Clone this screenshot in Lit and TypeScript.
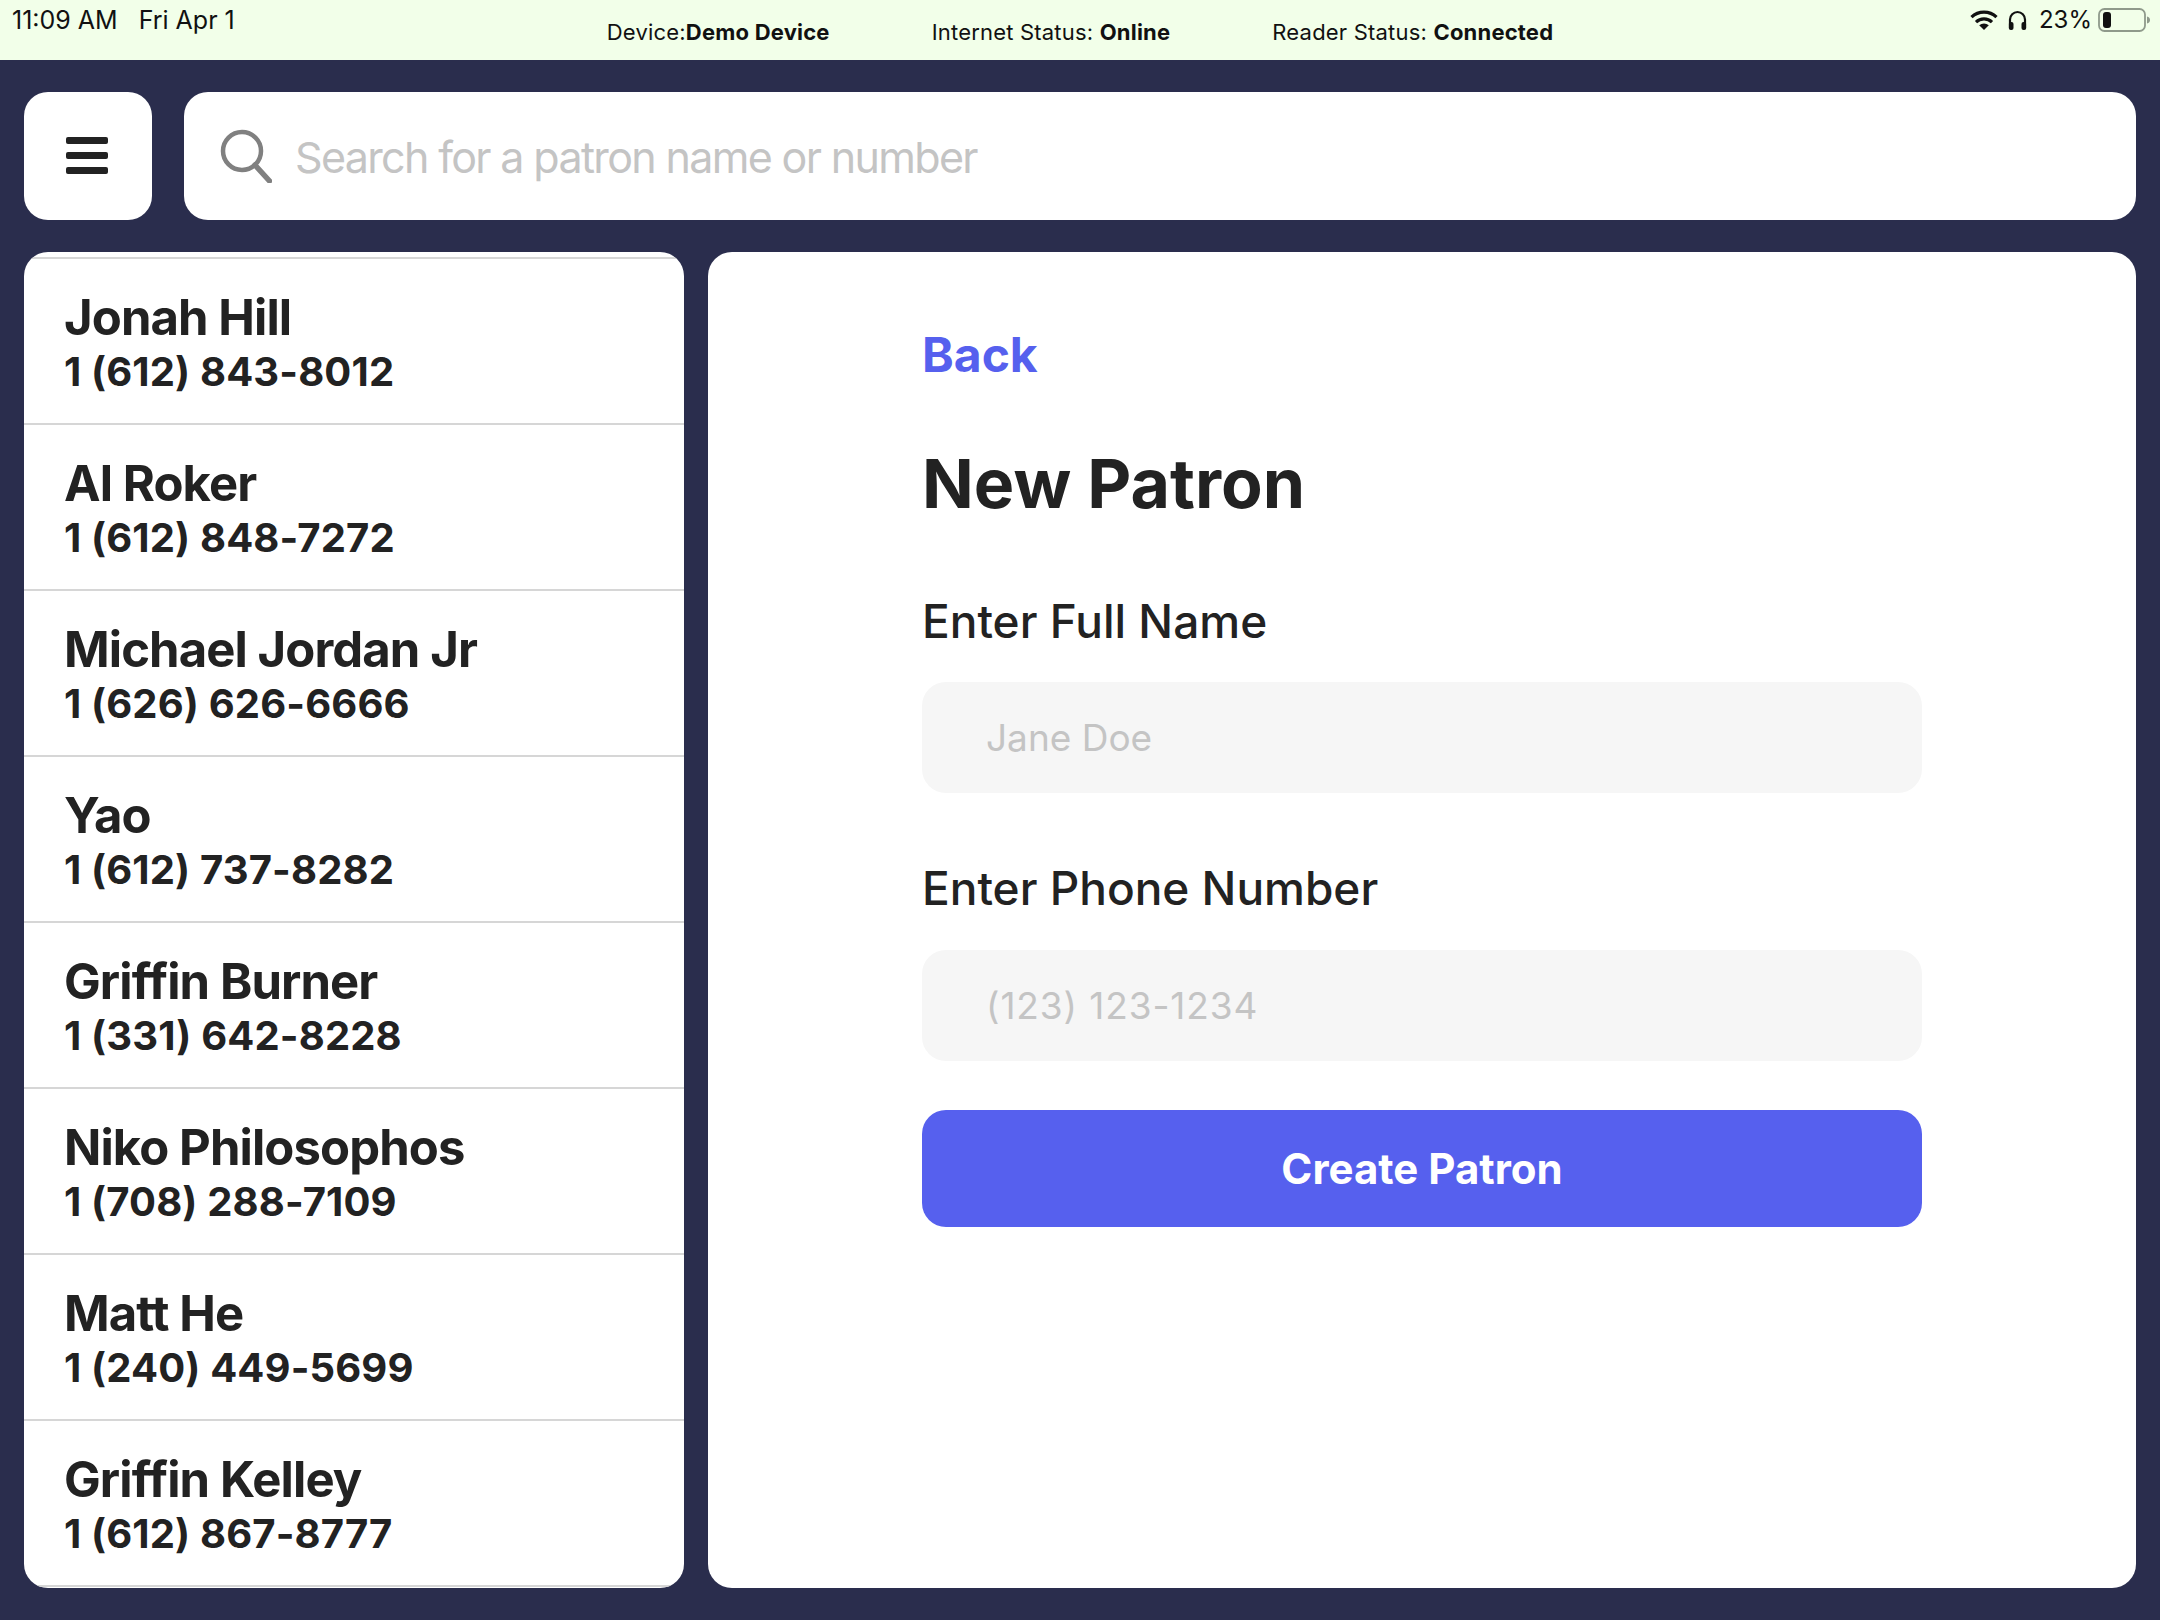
import { LitElement, html, css, svg } from "lit";
import { customElement } from "lit/decorators.js";

const patrons = [
  ["Jonah Hill", "1 (612) 843-8012"],
  ["Al Roker", "1 (612) 848-7272"],
  ["Michael Jordan Jr", "1 (626) 626-6666"],
  ["Yao", "1 (612) 737-8282"],
  ["Griffin Burner", "1 (331) 642-8228"],
  ["Niko Philosophos", "1 (708) 288-7109"],
  ["Matt He", "1 (240) 449-5699"],
  ["Griffin Kelley", "1 (612) 867-8777"],
];

@customElement("app-root")
export class AppRoot extends LitElement {
  static styles = css`
    :host {
      display: flex;
      flex-direction: column;
      width: 2160px;
      height: 1620px;
      background: #2a2d4d;
      font-family: Inter, "Liberation Sans", sans-serif;
      color: #222222;
      overflow: hidden;
    }
    * { box-sizing: border-box; }
    .status {
      height: 60px;
      flex: none;
      background: #f2ffe9;
      display: grid;
      grid-template-columns: 1fr auto 1fr;
      color: #111;
    }
    .clock {
      font-size: 25px;
      line-height: 30px;
      padding: 5px 0 0 12px;
      display: flex;
      gap: 21px;
    }
    .center {
      display: flex;
      gap: 102px;
      font-size: 22px;
      line-height: 28px;
      padding-top: 18px;
      letter-spacing: 0.2px;
    }
    .center b { font-weight: 700; }
    .sys {
      display: flex;
      justify-content: flex-end;
      align-items: flex-start;
      padding: 7px 10px 0 0;
      font-size: 24px;
      line-height: 26px;
    }
    .sys .wifi { margin: 3px 10px 0 0; }
    .sys .phones { margin: 3px 12px 0 0; }
    .sys .bat { margin: 1px 0 0 6px; }
    .top {
      display: flex;
      gap: 32px;
      padding: 32px 24px;
      flex: none;
    }
    .menu {
      width: 128px;
      height: 128px;
      flex: none;
      background: #fff;
      border: 0;
      border-radius: 24px;
      display: flex;
      align-items: center;
      justify-content: center;
      padding: 0 2px 0 0;
    }
    .search {
      flex: 1;
      height: 128px;
      background: #fff;
      border-radius: 24px;
      display: flex;
      align-items: center;
      gap: 23px;
      padding-left: 36px;
    }
    .search input {
      flex: 1;
      border: 0;
      outline: 0;
      background: transparent;
      font: 400 43px Inter, "Liberation Sans", sans-serif;
      letter-spacing: -1.65px;
      padding: 1px 0 0;
    }
    .search input::placeholder { color: #c4c4c4; opacity: 1; }
    .main {
      flex: 1;
      display: flex;
      gap: 24px;
      padding: 0 24px 32px;
      min-height: 0;
    }
    .list {
      width: 660px;
      flex: none;
      background: #fff;
      border-radius: 24px;
      overflow: hidden;
      padding-top: 5px;
    }
    .rows { border-top: 2px solid #d6d6d6; }
    .row {
      height: 166px;
      border-bottom: 2px solid #d6d6d6;
      padding: 33px 40px 0;
    }
    .name {
      font-size: 49px;
      font-weight: 650;
      line-height: 52px;
      letter-spacing: -0.9px;
    }
    .phone {
      font-size: 40px;
      font-weight: 650;
      line-height: 50px;
      margin-top: 3px;
      letter-spacing: 0.15px;
    }
    .panel {
      flex: 1;
      background: #fff;
      border-radius: 24px;
      display: flex;
      justify-content: center;
    }
    .form {
      width: 1000px;
      display: flex;
      flex-direction: column;
      padding-top: 75px;
    }
    .back {
      font-size: 48px;
      font-weight: 650;
      line-height: 56px;
      color: #5660ee;
    }
    h1 {
      margin: 58px 0 0;
      font-size: 68px;
      font-weight: 700;
      line-height: 84px;
    }
    label {
      font-size: 46px;
      font-weight: 500;
      line-height: 56px;
      margin-top: 68px;
    }
    label.second { margin: 67px 0 1px; }
    .field {
      margin-top: 33px;
      height: 111px;
      background: #f6f6f6;
      border: 0;
      outline: 0;
      border-radius: 24px;
      padding: 0 64px;
      font: 400 37px Inter, "Liberation Sans", sans-serif;
      width: 100%;
    }
    .field.num { letter-spacing: 0.9px; }
    .field::placeholder { color: #c4c4c4; opacity: 1; }
    .create {
      margin-top: 49px;
      height: 117px;
      background: #5660ee;
      color: #fff;
      border: 0;
      border-radius: 24px;
      font: 650 42px Inter, "Liberation Sans", sans-serif;
    }
  `;

  render() {
    return html`
      <div class="status">
        <div class="clock"><span>11:09 AM</span><span>Fri Apr 1</span></div>
        <div class="center">
          <span>Device:<b>Demo Device</b></span>
          <span>Internet Status: <b>Online</b></span>
          <span>Reader Status: <b>Connected</b></span>
        </div>
        <div class="sys">
          <svg class="wifi" width="28" height="20" viewBox="0 0 28 20">
            <path d="M14 20L9.200 15.300a7 7 0 0 1 9.600 0z" fill="#111" />
            <path d="M1.500 7.200a18 18 0 0 1 25 0M6 12.200a11.500 11.500 0 0 1 16 0" fill="none" stroke="#111" stroke-width="3.200" />
          </svg>
          <svg class="phones" width="19" height="20" viewBox="0 0 19 20">
            <path d="M2 14V9.500a7.500 7.500 0 0 1 15 0V14" fill="none" stroke="#111" stroke-width="2.200" />
            <rect x="0.800" y="12" width="4.700" height="8" rx="2" fill="#111" />
            <rect x="13.500" y="12" width="4.700" height="8" rx="2" fill="#111" />
          </svg>
          <span>23%</span>
          <svg class="bat" width="52" height="24" viewBox="0 0 52 24">
            <rect x="1" y="1" width="46" height="22" rx="5.500" fill="none" stroke="#8f9a8b" stroke-width="1.800" />
            <rect x="5" y="4" width="8" height="16" rx="3" fill="#111" />
            <path d="M49 8.500c2 .6 3 1.800 3 3.500s-1 2.900-3 3.500z" fill="#8f9a8b" />
          </svg>
        </div>
      </div>
      <div class="top">
        <button class="menu" aria-label="Menu">
          <svg width="42" height="38" viewBox="0 0 42 38">
            <rect y="0" width="42" height="7" rx="2" fill="#222" />
            <rect y="15" width="42" height="7" rx="2" fill="#222" />
            <rect y="30" width="42" height="7" rx="2" fill="#222" />
          </svg>
        </button>
        <div class="search">
          ${svg`<svg width="52" height="54" viewBox="0 0 52 54">
            <circle cx="22" cy="22" r="19" fill="none" stroke="#808080" stroke-width="4.500" />
            <path d="M35 36l14.500 16" fill="none" stroke="#808080" stroke-width="5.500" stroke-linecap="round" />
          </svg>`}
          <input placeholder="Search for a patron name or number" />
        </div>
      </div>
      <div class="main">
        <div class="list">
          <div class="rows">
            ${patrons.map(
              ([n, p]) => html`<div class="row"><div class="name">${n}</div><div class="phone">${p}</div></div>`
            )}
          </div>
        </div>
        <div class="panel">
          <div class="form">
            <div class="back">Back</div>
            <h1>New Patron</h1>
            <label>Enter Full Name</label>
            <input class="field" placeholder="Jane Doe" />
            <label class="second">Enter Phone Number</label>
            <input class="field num" placeholder="(123) 123-1234" />
            <button class="create">Create Patron</button>
          </div>
        </div>
      </div>
    `;
  }
}
